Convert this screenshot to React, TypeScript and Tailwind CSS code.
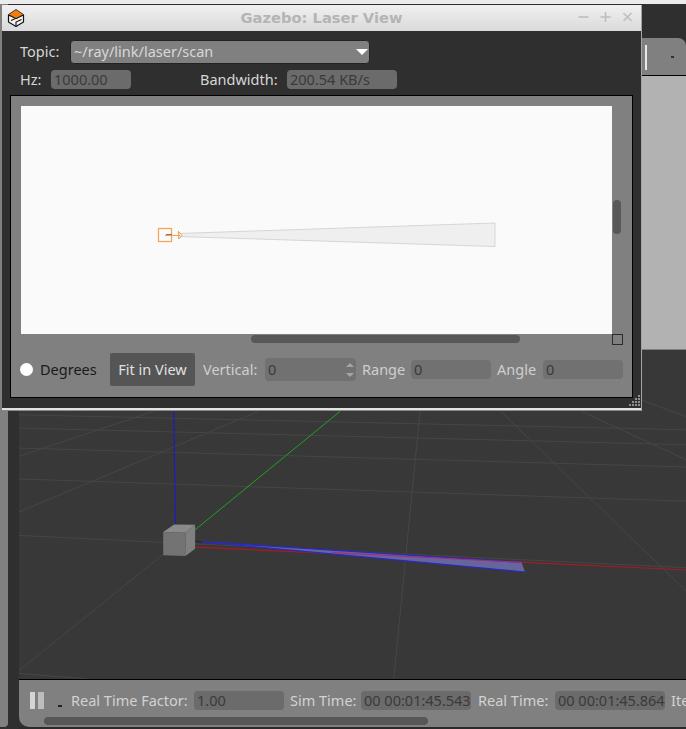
import React from "react";

const grid: [number, number, number, number][] = [
  [43, 105, 1568, 150],
  [43, 145, 1568, 195],
  [43, 205, 1568, 262],
  [43, 298, 1568, 365],
  [43, 468, 1568, 565],
  [43, 230, 350, 95],
  [43, 398, 590, 95],
  [43, 875, 373, 525],
  [960, 95, 900, 900],
  [1145, 95, 1568, 635],
  [1330, 95, 1568, 240],
  [1465, 60, 1568, 110],
  [43, 883, 200, 900],
];

function Scene() {
  return (
    <svg viewBox="19 350 667 330" className="block h-full w-full" preserveAspectRatio="none">
      <g transform="translate(0 380) scale(0.4375 0.33333)">
        {grid.map((l, i) => (
          <line key={i} x1={l[0]} y1={l[1]} x2={l[2]} y2={l[3]} stroke="#464646" strokeWidth="1" vectorEffect="non-scaling-stroke" />
        ))}
        <line x1="397" y1="95" x2="401" y2="435" stroke="#1a1ad0" strokeWidth="1.1" vectorEffect="non-scaling-stroke" />
        <line x1="777" y1="95" x2="445" y2="452" stroke="#1fa31f" strokeWidth="1" vectorEffect="non-scaling-stroke" />
        <line x1="448" y1="503" x2="1568" y2="572" stroke="#a51c24" strokeWidth="1.2" vectorEffect="non-scaling-stroke" />
        <polygon points="460,487 1192,549 1200,578" fill="#66669c" />
        <line x1="460" y1="487" x2="1192" y2="549" stroke="#2a2ac0" strokeWidth="1.4" vectorEffect="non-scaling-stroke" />
        <line x1="460" y1="487" x2="1200" y2="578" stroke="#2a2ac0" strokeWidth="1.2" vectorEffect="non-scaling-stroke" />
        <line x1="760" y1="520" x2="1192" y2="549" stroke="#a0307c" strokeWidth="1.2" vectorEffect="non-scaling-stroke" />
        <line x1="435" y1="484" x2="462" y2="488" stroke="#222" strokeWidth="1" vectorEffect="non-scaling-stroke" />
        <polygon points="373,458 398,435 446,436 424,460" fill="#8a8a8a" />
        <polygon points="373,458 424,460 424,530 373,528" fill="#737373" />
        <polygon points="424,460 446,436 446,508 424,530" fill="#808080" />
      </g>
    </svg>
  );
}

function GazeboLogo() {
  return (
    <svg width="18" height="20" viewBox="0 0 18 20" className="block">
      <path d="M9 10.5 L1.5 7 L1.5 14 L9 18.5 L16.5 14 L16.5 7 Z" fill="#f4f4f4" stroke="#111" strokeWidth="1.2" strokeLinejoin="round" />
      <path d="M4 12.5 L12 9 M9 18.5 L9 14 L14.5 11.5" fill="none" stroke="#111" strokeWidth="1.1" />
      <path d="M9 1.5 L16.5 6.5 L9 10.5 L1.5 6.5 Z" fill="#f47b0c" stroke="#222" strokeWidth="0.8" strokeLinejoin="round" />
    </svg>
  );
}

function LaserDrawing() {
  return (
    <svg viewBox="21 106 591 228" className="block h-full w-full">
      <polygon points="178,233.5 495,223 495,246.5 178,236.5" fill="#efefef" />
      <path d="M178 233.5 L495 223 V246.5 L178 236.5" fill="none" stroke="#d6d6d6" strokeWidth="1" />
      <rect x="158.5" y="228.5" width="13" height="13" fill="none" stroke="#f5a255" strokeWidth="1.2" />
      <line x1="166" y1="234.5" x2="172" y2="234.5" stroke="#777" strokeWidth="1" />
      <line x1="165" y1="235.5" x2="180" y2="235.5" stroke="#f5a255" strokeWidth="1" />
      <line x1="178.5" y1="231" x2="178.5" y2="239" stroke="#f5a255" strokeWidth="1" />
      <path d="M179 232 L182 235.5 L179 239" fill="none" stroke="#f5a255" strokeWidth="1" />
    </svg>
  );
}

function Field({ w, h = "h-[19px]", bg = "bg-[#6b6b6b]", children }: { w: string; h?: string; bg?: string; children?: React.ReactNode }) {
  return (
    <div className={`${w} ${h} ${bg} flex shrink-0 items-center rounded-[4px] pl-[3px] text-[14.5px] leading-none text-[#3a3a3a]`}>
      {children}
    </div>
  );
}

function WindowBtn({ d }: { d: string }) {
  return (
    <svg width="11" height="11" viewBox="0 0 11 11" className="block">
      <path d={d} stroke="#bdbdbd" strokeWidth="1.6" fill="none" />
    </svg>
  );
}

function LaserWindow() {
  return (
    <div className="absolute left-[2px] top-[5px] flex h-[406px] w-[640px] flex-col border-r border-[#a3a3a3]">
      <div className="relative flex h-[26px] shrink-0 items-center justify-center bg-gradient-to-b from-[#f0f0f0] to-[#dadada]">
        <div className="absolute left-[5px] top-[3px]">
          <GazeboLogo />
        </div>
        <span className="font-['DejaVu_Sans'] text-[14.7px] font-bold text-[#b4b4b4]">Gazebo: Laser View</span>
        <div className="absolute right-[8px] top-[6px] flex gap-[11px]">
          <WindowBtn d="M0.5 6 H10.5" />
          <WindowBtn d="M0.5 6 H10.5 M5.5 1 V11" />
          <WindowBtn d="M1.5 2 L9.5 10 M9.5 2 L1.5 10" />
        </div>
      </div>
      <div className="relative flex flex-1 flex-col bg-[#2f2f2f] pl-[8px] pr-[7px] text-[14.5px] text-[#d6d6d6]">
        <div className="mt-[9px] flex h-[24px] items-center pl-[10px]">
          <span className="w-[50px] shrink-0">Topic:</span>
          <div className="flex h-[24px] w-[300px] shrink-0 items-center justify-between rounded-[4px] border border-[#232323] bg-[#808080] pl-[3px] pr-[1px] text-[#d8d8d8]">
            <span>~/ray/link/laser/scan</span>
            <span className="h-0 w-0 border-x-[6.5px] border-t-[6px] border-x-transparent border-t-white" />
          </div>
        </div>
        <div className="mt-[6px] flex h-[19px] items-center pl-[10px]">
          <span className="w-[31px] shrink-0">Hz:</span>
          <Field w="w-[80px]">1000.00</Field>
          <span className="ml-[69px] w-[87px] shrink-0">Bandwidth:</span>
          <Field w="w-[110px]">200.54 KB/s</Field>
        </div>
        <div className="relative mt-[6px] flex h-[303px] w-[623px] flex-col border border-black bg-[#808080] pl-[10px] pt-[10px]">
          <div className="h-[228px] w-[591px] bg-[#fafafa]">
            <LaserDrawing />
          </div>
          <div className="absolute left-[602px] top-[104px] h-[34px] w-[8px] rounded-full bg-[#585858]" />
          <div className="absolute left-[240px] top-[239px] h-[8px] w-[269px] rounded-full bg-[#585858]" />
          <div className="absolute left-[601px] top-[238px] h-[11px] w-[11px] border border-[#2a2a2a]" />
          <div className="mt-[19px] flex h-[33px] items-center">
            <span className="-ml-[1px] h-[13px] w-[13px] shrink-0 rounded-full bg-white" />
            <span className="ml-[7px] w-[70px] shrink-0 text-[#1a1a1a]">Degrees</span>
            <button className="flex h-[33px] w-[85px] shrink-0 items-center justify-center rounded-[2px] bg-[#555555] text-[14.5px] text-[#e0e0e0]">Fit in View</button>
            <span className="ml-[8px] w-[62px] shrink-0 text-[#cfcfcf]">Vertical:</span>
            <Field w="w-[91px]" h="h-[23px]" bg="bg-[#717171]">
              <span className="flex-1">0</span>
              <span className="mr-[2px] flex flex-col gap-[6px]">
                <span className="block h-0 w-0 border-x-[4px] border-b-[4px] border-x-transparent border-b-[#a5a5a5]" />
                <span className="block h-0 w-0 border-x-[4px] border-t-[4px] border-x-transparent border-t-[#a5a5a5]" />
              </span>
            </Field>
            <span className="ml-[6px] w-[49px] shrink-0 text-[#cfcfcf]">Range</span>
            <Field w="w-[80px]" bg="bg-[#717171]">0</Field>
            <span className="ml-[6px] w-[46px] shrink-0 text-[#cfcfcf]">Angle</span>
            <Field w="w-[80px]" bg="bg-[#717171]">0</Field>
          </div>
        </div>
        <div className="absolute bottom-[2px] right-[1px] grid grid-cols-4 gap-[1px]">
          {[0, 0, 0, 1, 0, 0, 1, 1, 0, 1, 1, 1, 1, 1, 1, 1].map((v, i) => (
            <span key={i} className={v ? "h-[2px] w-[2px] bg-[#8f8f8f]" : "h-[2px] w-[2px]"} />
          ))}
        </div>
      </div>
      <div className="h-[3px] shrink-0 border-b border-[#8a8a8a] bg-[#e2e2e2]" />
    </div>
  );
}

export default function App() {
  return (
    <div className="relative flex h-[729px] w-[686px] flex-col overflow-hidden bg-[#2f2f2f] font-['Noto_Sans',sans-serif] text-[14.5px]">
      <div className="h-[4px] shrink-0 bg-[#ececec]" />
      <div className="flex min-h-0 flex-1">
        <div className="flex w-[19px] shrink-0">
          <div className="h-[723px] w-[8px] rounded-br-[4px] bg-[#808080]" />
        </div>
        <div className="flex min-w-0 flex-1 flex-col">
          <div className="h-[34px] shrink-0 bg-[#2f2f2f]" />
          <div className="relative h-[38px] shrink-0 rounded-tr-[8px] border-b border-black bg-[#808080]">
            <span className="absolute left-[626px] top-[7px] h-[25px] w-[2px] bg-[#e8e8e8]" />
            <span className="absolute left-[652px] top-[18px] h-[2px] w-[3px] bg-[#333333]" />
          </div>
          <div className="h-[274px] shrink-0 border-b border-[#808080] bg-[#b2b2b2]" />
          <div className="min-h-0 flex-1 bg-[#383838]">
            <Scene />
          </div>
          <div className="relative h-[48px] shrink-0 rounded-bl-[10px] border-t border-black bg-[#808080] text-[#d2d2d2]">
            <div className="flex h-[30px] items-center overflow-hidden whitespace-nowrap pl-[11px] pt-[11px]">
              <span className="h-[17px] w-[5px] shrink-0 bg-[#d4d4d4]" />
              <span className="ml-[3px] h-[17px] w-[6px] shrink-0 bg-[#bdbdbd]" />
              <span className="ml-[14px] mt-[10px] h-[2px] w-[4px] shrink-0 bg-[#222222]" />
              <span className="ml-[9px] w-[123px] shrink-0">Real Time Factor:</span>
              <Field w="w-[90px]">1.00</Field>
              <span className="ml-[6px] w-[71px] shrink-0">Sim Time:</span>
              <Field w="w-[110px]">00 00:01:45.543</Field>
              <span className="ml-[7px] w-[77px] shrink-0">Real Time:</span>
              <Field w="w-[110px]">00 00:01:45.864</Field>
              <span className="ml-[6px] shrink-0">Ite</span>
            </div>
            <div className="absolute bottom-[2px] left-[25px] h-[8px] w-[384px] rounded-full bg-[#575757]" />
          </div>
          <div className="h-[2px] shrink-0 bg-[#2a2a2a]" />
        </div>
      </div>
      <LaserWindow />
    </div>
  );
}
